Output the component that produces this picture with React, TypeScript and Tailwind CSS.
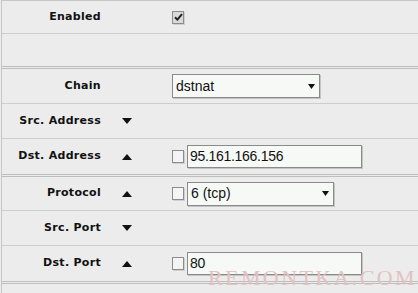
import React from "react";

type Arrow = "up" | "down" | null;

function Tri({ dir }: { dir: Arrow }) {
  if (!dir) return null;
  return (
    <svg width="10" height="6" viewBox="0 0 10 6" className="block">
      {dir === "down" ? (
        <path d="M0 0 H10 L5 6 Z" fill="#111" />
      ) : (
        <path d="M0 6 H10 L5 0 Z" fill="#111" />
      )}
    </svg>
  );
}

function Check({ checked }: { checked?: boolean }) {
  return (
    <div
      className={`w-[12px] h-[13px] border border-[#8c8c8c] shadow-[1px_1px_0_#d0d0d0] flex items-center justify-center ${
        checked ? "bg-[#dadada]" : "bg-[#f4f4f4]"
      }`}
    >
      {checked && (
        <svg width="9" height="8" viewBox="0 0 9 8">
          <path d="M1 4.2 L3.4 6.6 L8 1.2" stroke="#222" strokeWidth="2" fill="none" />
        </svg>
      )}
    </div>
  );
}

function SelectBox({ value, width }: { value: string; width: string }) {
  return (
    <div
      className={`${width} h-[24px] bg-[#f6f9f6] border border-[#8a8a8a] shadow-[1px_1px_0_#c4c4c4] flex items-center justify-between pl-[3px] pr-[4px] font-['Liberation_Sans',Arial,sans-serif] text-[14px] text-[#111]`}
    >
      <span>{value}</span>
      <svg width="7" height="5" viewBox="0 0 7 5">
        <path d="M0 0 H7 L3.5 5 Z" fill="#111" />
      </svg>
    </div>
  );
}

function TextBox({ value }: { value: string }) {
  return (
    <div className="w-[175px] h-[23px] bg-[#f6f9f6] border border-[#8a8a8a] shadow-[1px_1px_0_#c4c4c4] flex items-center pl-[2px] font-['Liberation_Sans',Arial,sans-serif] text-[14px] tracking-[-0.3px] text-[#111]">
      {value}
    </div>
  );
}

function Row({
  label,
  arrow = null,
  h,
  border = "single",
  children,
}: {
  label?: string;
  arrow?: Arrow;
  h: string;
  border?: "single" | "double";
  children?: React.ReactNode;
}) {
  return (
    <div
      className={`flex items-center ${h} ${
        border === "double"
          ? "border-b-[3px] border-double border-[#bdbdbd]"
          : "border-b border-[#cdcdcd]"
      }`}
    >
      <div className="w-[99px] text-right font-bold text-[11px] tracking-[0.3px] text-[#111]">
        {label}
      </div>
      <div className="w-[71px] pl-[21px]">
        <Tri dir={arrow} />
      </div>
      <div className="flex items-center gap-[3px]">{children}</div>
    </div>
  );
}

export default function App() {
  return (
    <div className="relative w-[418px] h-[293px] overflow-hidden bg-[#ececec] font-['DejaVu_Sans',Verdana,sans-serif]">
      <div className="ml-px h-full border-l border-t border-[#c6c6c6]">
        <Row label="Enabled" h="h-[33px]">
          <Check checked />
        </Row>
        <Row h="h-[35px]" border="double" />
        <Row label="Chain" h="h-[35px]">
          <SelectBox value="dstnat" width="w-[148px]" />
        </Row>
        <Row label="Src. Address" arrow="down" h="h-[35px]" />
        <Row label="Dst. Address" arrow="up" h="h-[38px]" border="double">
          <Check />
          <TextBox value="95.161.166.156" />
        </Row>
        <Row label="Protocol" arrow="up" h="h-[34px]">
          <Check />
          <SelectBox value="6 (tcp)" width="w-[147px]" />
        </Row>
        <Row label="Src. Port" arrow="down" h="h-[35px]" />
        <Row label="Dst. Port" arrow="up" h="h-[38px]" border="double">
          <Check />
          <TextBox value="80" />
        </Row>
      </div>
      <div className="absolute left-[208px] top-[267px] leading-none font-['Liberation_Serif','Times_New_Roman',serif] text-[22px] tracking-[2.4px] text-[#e2c2c2] pointer-events-none whitespace-nowrap">
        REMONTKA.COM
      </div>
    </div>
  );
}
